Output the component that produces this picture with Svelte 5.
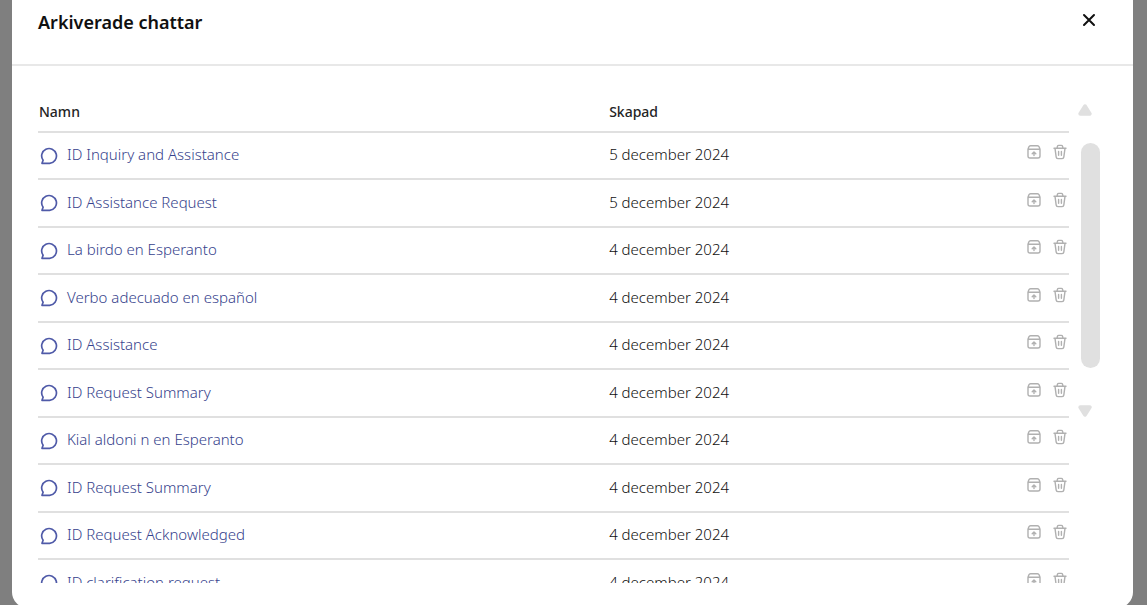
<script>
  const chats = [
    { name: 'ID Inquiry and Assistance', created: '5 december 2024' },
    { name: 'ID Assistance Request', created: '5 december 2024' },
    { name: 'La birdo en Esperanto', created: '4 december 2024' },
    { name: 'Verbo adecuado en español', created: '4 december 2024' },
    { name: 'ID Assistance', created: '4 december 2024' },
    { name: 'ID Request Summary', created: '4 december 2024' },
    { name: 'Kial aldoni n en Esperanto', created: '4 december 2024' },
    { name: 'ID Request Summary', created: '4 december 2024' },
    { name: 'ID Request Acknowledged', created: '4 december 2024' },
    { name: 'ID clarification request', created: '4 december 2024' }
  ];
</script>

<div class="backdrop">
  <div class="dialog" role="dialog" aria-labelledby="title">
    <header>
      <h1 id="title">Arkiverade chattar</h1>
      <button class="close" aria-label="Stäng">
        <svg width="14" height="14" viewBox="0 0 14 14"><path d="M2 2l10 10M12 2L2 12" /></svg>
      </button>
    </header>

    <div class="body">
      <div class="list">
        <table>
          <thead>
            <tr>
              <th class="name">Namn</th>
              <th>Skapad</th>
              <th class="tools" aria-label="Åtgärder"></th>
            </tr>
          </thead>
          <tbody>
            {#each chats as chat}
              <tr>
                <td>
                  <a href="#chat">
                    <svg class="bubble" width="18" height="18" viewBox="0 0 18 18">
                      <path d="M2 16.3L3.1 13.3A7.4 7.4 0 1 1 9.6 16.3Z" />
                    </svg>
                    <span>{chat.name}</span>
                  </a>
                </td>
                <td>{chat.created}</td>
                <td>
                  <div class="actions">
                    <button aria-label="Återställ">
                      <svg width="14" height="16" viewBox="0 0 14 16">
                        <path d="M1 5.3L1.8 3Q2.3 1.8 3.5 1.8H10.5Q11.7 1.8 12.2 3L13 5.3V12Q13 14 11 14H3Q1 14 1 12ZM1 5.3H13M7 11.6V8.2M5.2 9.8L7 8L8.8 9.8" />
                      </svg>
                    </button>
                    <button aria-label="Ta bort">
                      <svg width="14" height="16" viewBox="0 0 14 16">
                        <path d="M1 4.3H13M2 4.3L3.2 13.2Q3.4 14.6 4.8 14.6H9.2Q10.6 14.6 10.8 13.2L12 4.3M4 4.3L4.4 2.4Q4.7 1.4 5.7 1.4H8.3Q9.3 1.4 9.6 2.4L10 4.3M5.6 7.5V11.3M8.4 7.5V11.3" />
                      </svg>
                    </button>
                  </div>
                </td>
              </tr>
            {/each}
          </tbody>
        </table>
      </div>

      <div class="scroll" aria-hidden="true">
        <svg width="14" height="12" viewBox="0 0 14 12"><path d="M7 2.3L11.7 9.7H2.3Z" /></svg>
        <div class="thumb"></div>
        <svg width="14" height="12" viewBox="0 0 14 12"><path d="M7 9.7L11.7 2.3H2.3Z" /></svg>
      </div>
    </div>
  </div>
</div>

<style>
  :global(body) {
    margin: 0;
    background: #7f7f7f;
  }

  .backdrop {
    box-sizing: border-box;
    display: flex;
    height: 100vh;
    padding: 0 14px 0 12px;
    overflow: hidden;
    background: #7f7f7f;
    color: #101010;
    font-family: 'Segoe UI', 'Noto Sans', sans-serif;
    font-size: 15px;
    font-weight: 300;
    line-height: 20px;
  }

  .dialog {
    display: flex;
    flex: 1;
    flex-direction: column;
    min-width: 0;
    margin-bottom: -3px;
    border-radius: 0 0 16px 16px;
    background: #fff;
  }

  header {
    display: flex;
    justify-content: space-between;
    padding: 9px 34px 28px 26px;
    border-bottom: 2px solid #e8e8e8;
  }

  h1 {
    margin: 0;
    font-size: 18px;
    font-weight: 600;
    line-height: 27px;
  }

  button {
    padding: 0;
    border: 0;
    background: none;
  }

  button svg {
    display: block;
  }

  path {
    fill: none;
    stroke-linecap: round;
    stroke-linejoin: round;
  }

  .close {
    align-self: flex-start;
    margin-top: 4px;
    padding: 0 3px;
  }

  .close path {
    stroke: #111;
    stroke-width: 2;
  }

  .body {
    display: flex;
    flex: 1;
    gap: 9px;
    min-height: 0;
    padding: 34px 33px 25px 26px;
  }

  .list {
    flex: 1;
    min-width: 0;
    overflow: hidden;
  }

  table {
    width: 100%;
    border-spacing: 0;
    table-layout: fixed;
  }

  th,
  td {
    box-sizing: border-box;
    height: 47px;
    padding: 0;
    border-bottom: 2px solid #e0e0e0;
    text-align: left;
    vertical-align: middle;
  }

  th {
    height: 33px;
    padding: 1px 0 8px 1px;
    color: #242424;
    font-size: 14px;
    font-weight: 500;
    line-height: 22px;
  }

  td:nth-child(2) {
    padding: 0 0 3px 1px;
  }

  tr:nth-child(even) td {
    height: 48px;
  }

  .name {
    width: 55.3%;
  }

  .tools {
    width: 60px;
  }

  a {
    display: flex;
    align-items: center;
    gap: 9px;
    padding-left: 2px;
    color: #36428c;
    text-decoration: none;
  }

  a span {
    padding-bottom: 3px;
  }

  .bubble path {
    stroke: #4f5aa8;
    stroke-width: 1.7;
  }

  .actions {
    display: flex;
    justify-content: flex-end;
    gap: 12px;
    padding: 0 2px 7px 0;
  }

  .actions path {
    stroke: #b0b0b0;
    stroke-width: 1.4;
  }

  .scroll {
    display: flex;
    flex-direction: column;
    width: 22px;
    padding-top: 4px;
  }

  .scroll path {
    fill: #e0e0e0;
    stroke: #e0e0e0;
    stroke-width: 4;
  }

  .thumb {
    width: 19px;
    height: 225px;
    margin: 27px 0 37px 3px;
    border-radius: 10px;
    background: #e0e0e0;
  }
</style>
